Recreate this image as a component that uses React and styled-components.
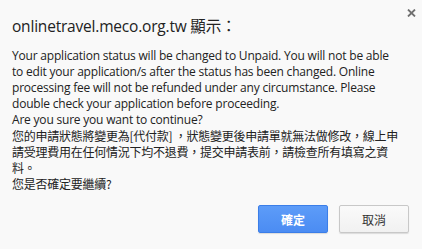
import React from "react";
import styled, { createGlobalStyle } from "styled-components";

const GlobalStyle = createGlobalStyle`
  html, body {
    margin: 0;
    padding: 0;
    background: #ffffff;
  }
  body {
    font-family: "Open Sans", "Noto Sans CJK TC", sans-serif;
    color: #222;
  }
`;

const StyledPage = styled.div`
  display: flex;
  width: 432px;
  height: 249px;
  background: #ffffff;
`;

const StyledDialog = styled.div`
  display: flex;
  flex-direction: column;
  width: 422px;
  height: 249px;
  background: #f9f9f9;
  box-sizing: border-box;
`;

const StyledHeader = styled.div`
  display: flex;
  justify-content: space-between;
  align-items: flex-start;
  padding-left: 12px;
  height: 48px;
  box-sizing: border-box;
`;

const StyledTitle = styled.div`
  margin-top: 16px;
  font-family: "Open Sans", "Noto Sans CJK TC", sans-serif;
  font-size: 15.5px;
  line-height: 20px;
  color: #222;
  letter-spacing: -0.2px;
`;

const StyledClose = styled.button`
  display: flex;
  align-items: center;
  justify-content: center;
  width: 20px;
  height: 20px;
  margin: 3px 1px 0 0;
  padding: 0;
  border: none;
  background: transparent;
`;

const StyledMessage = styled.div`
  padding: 0 12px;
  font-size: 12px;
  line-height: 16px;
  color: #222;
`;

const StyledLine = styled.div`
  white-space: nowrap;
  letter-spacing: ${p => (p.$cjk ? "-0.25px" : "-0.2px")};
  font-family: ${p =>
    p.$cjk
      ? '"Noto Sans CJK TC", sans-serif'
      : '"Open Sans", "Noto Sans CJK TC", sans-serif'};
`;

const StyledFooter = styled.div`
  display: flex;
  justify-content: flex-end;
  gap: 11px;
  padding: 13px 13px 0 0;
`;

const StyledButton = styled.button`
  width: 70px;
  height: 28px;
  box-sizing: border-box;
  border-radius: 2px;
  font-family: "Noto Sans CJK TC", sans-serif;
  font-size: 12px;
  cursor: pointer;
  border: 1px solid ${p => (p.$primary ? "#3b7ee8" : "#c8c8c8")};
  background: ${p =>
    p.$primary
      ? "linear-gradient(#5d9cf8, #4b8cf3)"
      : "linear-gradient(#fafafa, #f1f1f1)"};
  color: ${p => (p.$primary ? "#ffffff" : "#333333")};
  font-weight: ${p => (p.$primary ? 700 : 400)};
  box-shadow: 0 1px 1px rgba(0, 0, 0, 0.12);
`;

const englishLines = [
  "Your application status will be changed to Unpaid. You will not be able",
  "to edit your application/s after the status has been changed. Online",
  "processing fee will not be refunded under any circumstance. Please",
  "double check your application before proceeding.",
  "Are you sure you want to continue?"
];

const chineseLines = [
  "您的申請狀態將變更為[代付款] ，狀態變更後申請單就無法做修改，線上申",
  "請受理費用在任何情況下均不退費，提交申請表前，請檢查所有填寫之資",
  "料。",
  "您是否確定要繼續?"
];

export default function App() {
  return (
    <StyledPage>
      <GlobalStyle />
      <StyledDialog>
        <StyledHeader>
          <StyledTitle>onlinetravel.meco.org.tw 顯示：</StyledTitle>
          <StyledClose aria-label="close">
            <svg width="9" height="8" viewBox="0 0 9 8">
              <path
                d="M1 0.5 L8 7.5 M8 0.5 L1 7.5"
                stroke="#707070"
                strokeWidth="1.8"
              />
            </svg>
          </StyledClose>
        </StyledHeader>
        <StyledMessage>
          {englishLines.map(line => (
            <StyledLine key={line}>{line}</StyledLine>
          ))}
          {chineseLines.map(line => (
            <StyledLine key={line} $cjk>
              {line}
            </StyledLine>
          ))}
        </StyledMessage>
        <StyledFooter>
          <StyledButton $primary>確定</StyledButton>
          <StyledButton>取消</StyledButton>
        </StyledFooter>
      </StyledDialog>
    </StyledPage>
  );
}
